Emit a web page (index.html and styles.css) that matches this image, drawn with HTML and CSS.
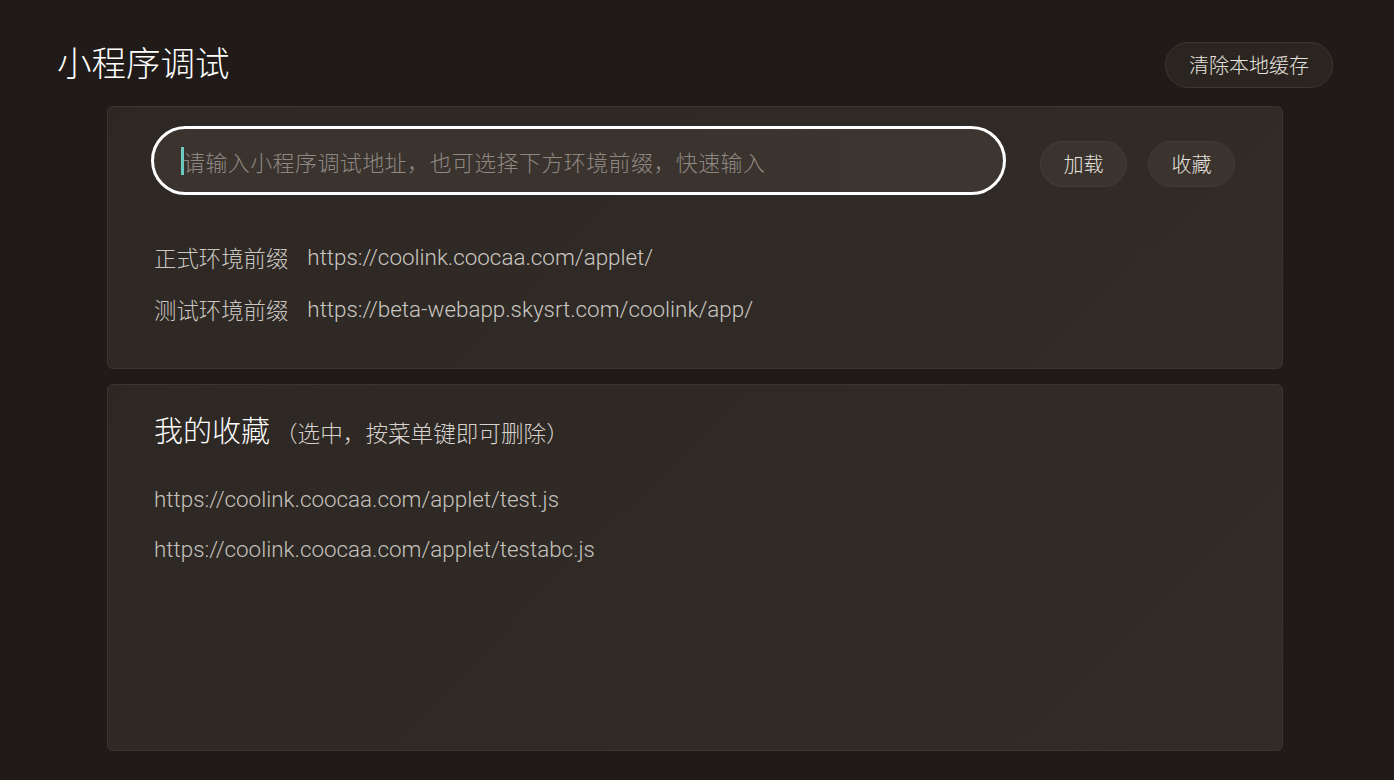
FILE: index.html
```html
<!DOCTYPE html>
<html lang="zh-CN">
<head>
    <meta charset="UTF-8">
    <meta name="viewport" content="width=device-width, initial-scale=1.0">
    <title>小程序调试</title>
    <link rel="stylesheet" href="styles.css">
</head>
<body>
    <div class="page">
        <div class="header">
            <h1>小程序调试</h1>
            <button class="pill clear-btn">清除本地缓存</button>
        </div>

        <div class="card load-card">
            <div class="input-row">
                <div class="url-input">
                    <span class="caret"></span>
                    <span class="placeholder">请输入小程序调试地址，也可选择下方环境前缀，快速输入</span>
                </div>
                <button class="pill">加载</button>
                <button class="pill">收藏</button>
            </div>

            <div class="env-list">
                <div class="env-item">
                    <span class="env-name">正式环境前缀</span>
                    <span class="env-url">https://coolink.coocaa.com/applet/</span>
                </div>
                <div class="env-item">
                    <span class="env-name">测试环境前缀</span>
                    <span class="env-url">https://beta-webapp.skysrt.com/coolink/app/</span>
                </div>
            </div>
        </div>

        <div class="card fav-card">
            <h2>我的收藏<span class="hint">（选中，按菜单键即可删除）</span></h2>
            <div class="fav-list">
                <div class="fav-item">https://coolink.coocaa.com/applet/test.js</div>
                <div class="fav-item">https://coolink.coocaa.com/applet/testabc.js</div>
            </div>
        </div>
    </div>
</body>
</html>
```

FILE: styles.css
```css
html, body {
    margin: 0;
    height: 100%;
}

body {
    background-color: #201b18;
    font-family: Roboto, "Noto Sans CJK SC", sans-serif;
    font-weight: 300;
    color: #cac6c1;
    overflow: hidden;
}

.page {
    padding-top: 42px;
}

.header {
    display: flex;
    justify-content: space-between;
    align-items: center;
    height: 45px;
    padding: 0 61px 0 57px;
}

h1 {
    margin: 0;
    font-size: 34.5px;
    font-weight: 300;
    color: #ffffff;
    line-height: 45px;
}

.pill {
    font-family: inherit;
    font-weight: 300;
    font-size: 20px;
    color: #e6e2de;
    background-color: #332d29;
    border: 1px solid #453d37;
    border-radius: 23px;
    height: 46px;
    padding: 0 22px;
    cursor: pointer;
}

.clear-btn {
    height: 46px;
    width: 168px;
    padding: 0;
    background-color: #2a2521;
    border-color: #3d3631;
}

.card {
    margin: 0 111px 0 107px;
    background: linear-gradient(135deg, #2d2824 0%, #322c28 100%);
    border: 1px solid #3b3530;
    border-radius: 6px;
    box-sizing: border-box;
}

.load-card {
    margin-top: 19px;
    padding: 19px 45px 0 43px;
    height: 263px;
}

.input-row {
    display: flex;
    align-items: center;
}

.url-input {
    flex: none;
    width: 855px;
    height: 69px;
    box-sizing: border-box;
    border: 3px solid #ffffff;
    border-radius: 35px;
    background: linear-gradient(90deg, #3b342e 0%, #3a332e 60%, #3d3630 100%);
    display: flex;
    align-items: center;
    padding-left: 27px;
    margin-right: 34px;
}

.caret {
    width: 3px;
    height: 28px;
    background-color: #6fc9c3;
    margin-right: -1px;
}

.placeholder {
    font-size: 22px;
    color: #8e8883;
    letter-spacing: 0.4px;
}

.input-row .pill {
    flex: none;
    width: 87px;
    padding: 0;
    margin-top: 6px;
    background-color: #3a332e;
    border-color: #453d36;
}

.input-row .pill + .pill {
    margin-left: 21px;
}

.env-list {
    margin-top: 36px;
    padding-left: 3px;
}

.env-item {
    height: 52px;
    display: flex;
    align-items: center;
    font-size: 22.4px;
}

.env-name {
    margin-right: 19px;
}

.fav-card {
    margin-top: 15px;
    height: 367px;
    padding: 27px 47px 0 46px;
}

h2 {
    margin: 0;
    font-size: 29px;
    font-weight: 300;
    color: #ffffff;
    line-height: 40px;
}

.hint {
    font-size: 22.6px;
    font-weight: 300;
    color: #d6d2cd;
    margin-left: 5px;
}

.fav-list {
    margin-top: 19px;
}

.fav-item {
    height: 50px;
    line-height: 50px;
    font-size: 22.4px;
    color: #c6c2bd;
}
```
